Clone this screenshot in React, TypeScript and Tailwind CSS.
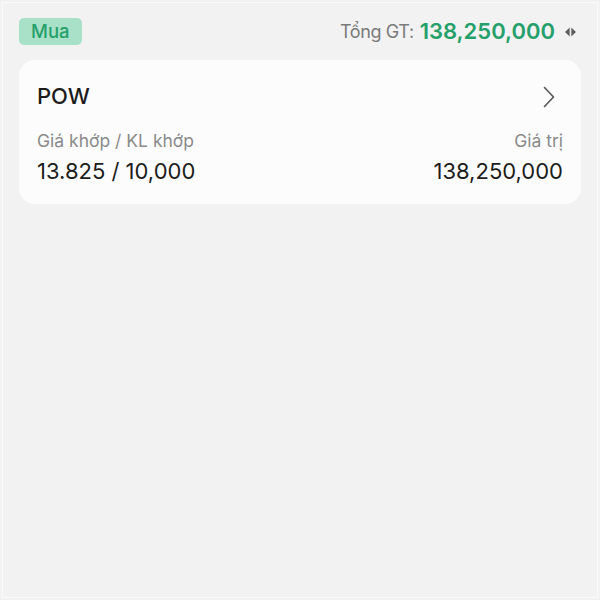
export default function App() {
  return (
    <div className="h-[600px] w-[600px] bg-[#f2f2f2] p-[2px] font-['Inter',sans-serif]">
      <div className="h-full w-full border border-[#fafafa] px-[16px] pt-[12px]">
        <div className="flex items-center justify-between">
          <span className="rounded-[5px] bg-[#a9e0c8] px-[12px] py-[3px] text-[18.5px] font-medium leading-[21px] text-[#25a06a]">
            Mua
          </span>
          <div className="mr-[4px] flex items-center">
            <span className="text-[18px] tracking-[-0.4px] text-[#7a7a7a]">Tổng GT:</span>
            <span className="ml-[6px] text-[22px] font-semibold text-[#25a06a]">138,250,000</span>
            <svg className="ml-[9px]" width="13" height="10" viewBox="0 0 13 10">
              <path d="M5.7 0.5 L1 5 L5.7 9.5 Z" fill="#5f5f5f" />
              <path d="M7.3 0.5 L12 5 L7.3 9.5 Z" fill="#5f5f5f" />
            </svg>
          </div>
        </div>

        <div className="mt-[12px] rounded-[16px] bg-[#fcfcfc] px-[18px] pb-[16px] pt-[20px]">
          <div className="flex items-center justify-between">
            <span className="text-[22px] font-medium text-[#1c1c1c]">POW</span>
            <svg className="mr-[8px]" width="12" height="22" viewBox="0 0 12 22" fill="none">
              <polyline points="1.5,1.5 10.5,11 1.5,20.5" stroke="#555" strokeWidth="1.6" strokeLinecap="round" strokeLinejoin="round" />
            </svg>
          </div>
          <div className="mt-[15px] flex items-end justify-between">
            <div className="flex flex-col">
              <span className="text-[17.5px] text-[#8a8a8a]">Giá khớp / KL khớp</span>
              <span className="mt-[1px] text-[22px] text-[#1c1c1c]">13.825 / 10,000</span>
            </div>
            <div className="flex flex-col items-end">
              <span className="text-[17.5px] text-[#8a8a8a]">Giá trị</span>
              <span className="mt-[1px] text-[22px] text-[#1c1c1c]">138,250,000</span>
            </div>
          </div>
        </div>
      </div>
    </div>
  );
}
